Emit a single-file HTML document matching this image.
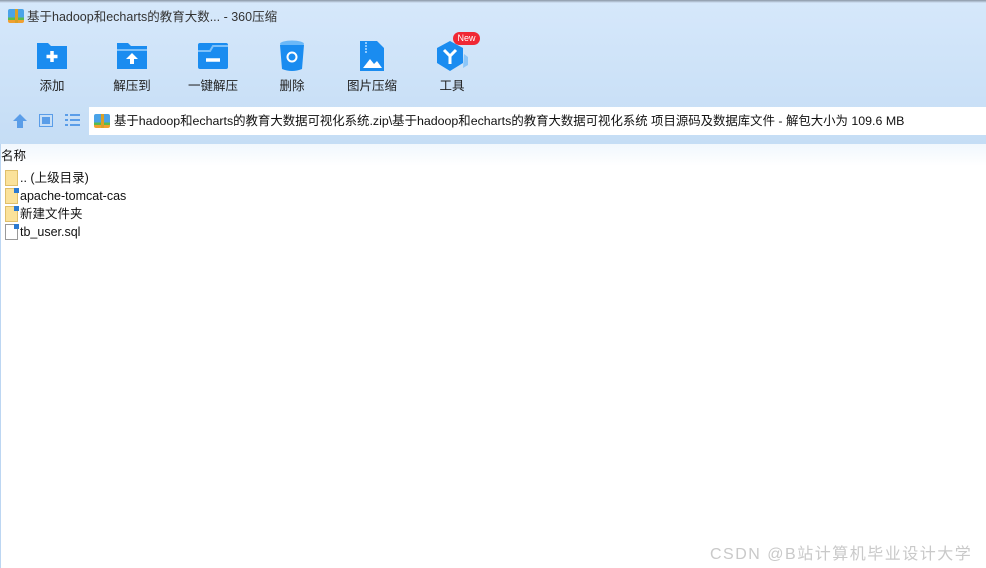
<!DOCTYPE html>
<html><head><meta charset="utf-8"><style>
*{margin:0;padding:0;box-sizing:border-box}
body{width:986px;height:568px;overflow:hidden;background:#fff;font-family:"Liberation Sans","Noto Sans CJK SC",sans-serif;font-size:13px;color:#111;position:relative}
.top{position:absolute;left:0;top:0;width:986px;height:144px;background:linear-gradient(#d6e8fb,#c5ddf5)}
.top:before{content:"";position:absolute;left:0;top:0;width:986px;height:3px;background:linear-gradient(#8a96a4,#d6e8fb)}
.title{position:absolute;left:27px;top:8px;color:#333;font-size:12.5px;line-height:18px}
.zip{position:absolute;width:16px;height:14px;border-radius:2px;background:linear-gradient(#4aa3e8 0 60%,#5cbc4c 60% 80%,#f0a030 80%)}
.zip:after{content:"";position:absolute;left:7px;top:0;width:3px;height:14px;background:#d9a028}
.btn{position:absolute;top:40px;text-align:center;font-size:12.5px;color:#222;line-height:18px}
.btn svg{position:absolute;left:50%;top:0;transform:translateX(-50%)}
.btn div{position:absolute;left:0;right:0;top:37px}
.addr{position:absolute;left:89px;top:107px;width:897px;height:28px;background:#fff}
.addr span{position:absolute;left:25px;top:5px;font-size:12.4px;line-height:18px;white-space:nowrap}
.hdr{position:absolute;left:0;top:144px;width:986px;height:22px;background:linear-gradient(#f1f7fd,#fff)}
.row{position:absolute;left:20px;font-size:12.5px;line-height:18px;height:18px}
.ico{position:absolute;left:5px;width:13px;height:16px;background:#fbe29a;border:1px solid #e0bf6a}
.file{background:#fff;border:1px solid #999}
.lk:after{content:"";position:absolute;right:-2px;top:-1px;width:5px;height:5px;background:#2c7ad0}
.leftline{position:absolute;left:0;top:144px;width:1px;height:424px;background:#bcd6f2}
.wm{position:absolute;left:710px;top:540px;color:#c9c9c9;font-size:16px;letter-spacing:1.5px;white-space:nowrap}
</style></head><body>
<div class="top">
<div class="zip" style="left:8px;top:9px"></div>
<div class="title">基于hadoop和echarts的教育大数... - 360压缩</div>

<div class="btn" style="left:22px;width:60px;height:60px">
<svg width="32" height="30" viewBox="0 0 32 30"><path d="M1 3h11l3 3h16v23H1z" fill="#1a8cf0"/><path d="M16 11v11M10.5 16.5h11" stroke="#fff" stroke-width="3.5"/></svg><div>添加</div></div>
<div class="btn" style="left:102px;width:60px;height:60px">
<svg width="32" height="30" viewBox="0 0 32 30"><path d="M1 3h11l3 3h16v23H1z" fill="#1a8cf0"/><path d="M1 10h30" stroke="#7cc0fa" stroke-width="2"/><path d="M16 13l6 6h-4v5h-4v-5h-4z" fill="#fff"/></svg><div>解压到</div></div>
<div class="btn" style="left:183px;width:60px;height:60px">
<svg width="32" height="30" viewBox="0 0 32 30"><rect x="1" y="3" width="30" height="26" rx="2" fill="#1a8cf0"/><path d="M1 11h12l3-5h15" stroke="#7cc0fa" stroke-width="2" fill="none"/><path d="M9 20h14" stroke="#fff" stroke-width="3.5"/></svg><div>一键解压</div></div>
<div class="btn" style="left:262px;width:60px;height:60px">
<svg width="26" height="32" viewBox="0 0 26 32"><ellipse cx="13" cy="4" rx="12" ry="3.5" fill="#6ab8f8"/><path d="M1 5h24l-2 24q-10 4-20 0z" fill="#1a8cf0"/><circle cx="13" cy="17" r="4.5" stroke="#fff" stroke-width="2" fill="none"/></svg><div>删除</div></div>
<div class="btn" style="left:342px;width:60px;height:60px">
<svg width="26" height="32" viewBox="0 0 26 32"><path d="M1 1h17l7 7v23H1z" fill="#1a8cf0"/><path d="M4 28l7-9 4 5 3-3 5 7z" fill="#fff"/><path d="M7 2v12" stroke="#8fcaff" stroke-width="2" stroke-dasharray="2 1"/></svg><div>图片压缩</div></div>
<div class="btn" style="left:422px;width:60px;height:60px">
<svg width="34" height="32" viewBox="0 0 34 32"><path d="M29 14l4 3v8l-5 3z" fill="#8cc6f8"/><path d="M15 1l13 7v15l-13 8-13-8V8z" fill="#1a8cf0"/><path d="M9 10l6 6 6-6M15 16v8" stroke="#fff" stroke-width="3" fill="none"/></svg><div>工具</div></div>
<div style="position:absolute;left:453px;top:32px;width:27px;height:13px;border-radius:7px;background:#f02834;color:#fff;font-size:9px;text-align:center;line-height:13px">New</div>

<svg style="position:absolute;left:12px;top:114px" width="16" height="14" viewBox="0 0 16 14"><path d="M8 0l7 7h-4v7H5V7H1z" fill="#5a9de8"/></svg>
<svg style="position:absolute;left:39px;top:114px" width="14" height="13" viewBox="0 0 14 13"><rect x="0.5" y="0.5" width="13" height="12" fill="none" stroke="#5a9de8"/><rect x="3" y="3" width="8" height="7" fill="#5a9de8"/></svg>
<svg style="position:absolute;left:65px;top:114px" width="15" height="12" viewBox="0 0 15 12"><path d="M0 1h3M5 1h10M0 6h3M5 6h10M0 11h3M5 11h10" stroke="#5a9de8" stroke-width="2"/></svg>
<div class="addr"><div class="zip" style="left:5px;top:7px"></div><span>基于hadoop和echarts的教育大数据可视化系统.zip\基于hadoop和echarts的教育大数据可视化系统 项目源码及数据库文件 - 解包大小为 109.6 MB</span></div>
</div>
<div class="hdr"><span style="position:absolute;left:1px;top:3px;font-size:12.5px;line-height:18px">名称</span></div>
<div class="leftline"></div>
<div class="ico" style="top:170px"></div><div class="row" style="top:169px">.. (上级目录)</div>
<div class="ico lk" style="top:188px"></div><div class="row" style="top:187px">apache-tomcat-cas</div>
<div class="ico lk" style="top:206px"></div><div class="row" style="top:205px">新建文件夹</div>
<div class="ico file lk" style="top:224px"></div><div class="row" style="top:223px">tb_user.sql</div>
<div class="wm">CSDN @B站计算机毕业设计大学</div>
</body></html>
